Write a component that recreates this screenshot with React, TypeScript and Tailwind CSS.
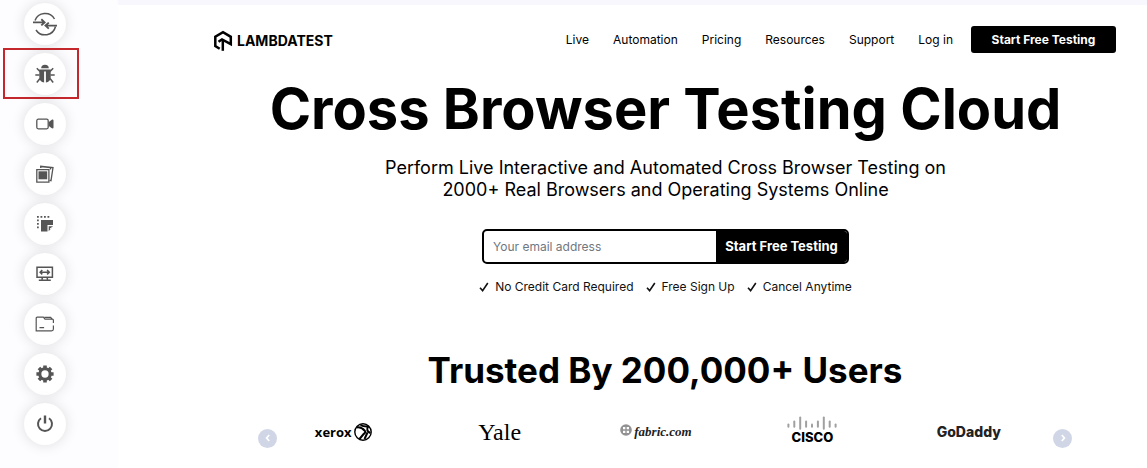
import type { ReactNode } from "react";

const stroke = { fill: "none", stroke: "currentColor" } as const;

const tools: { label: string; active?: boolean; icon: ReactNode }[] = [
  {
    label: "Switch",
    icon: (
      <svg viewBox="0 0 26 26" className="size-[26px]" {...stroke} strokeWidth="1.5">
        <path d="M3 9.5A10.8 10.8 0 0 1 22.5 8M23.5 15.5A10.8 10.8 0 0 1 4 19" />
        <path strokeWidth="1.9" d="M1 11.4H12M9.3 8.3l3.3 3.1-3.3 3M25 14.6H14M16.8 11.6l-3.3 3 3.3 3" />
      </svg>
    ),
  },
  {
    label: "Bug",
    active: true,
    icon: (
      <svg viewBox="0 0 20 20" className="size-5">
        <path fill="currentColor" d="M6.2 4.3a3.8 3.6 0 0 1 7.6 0zM4.3 5.4h11.4v8.2c0 2.6-1.8 4.6-4.8 5V7.4H9.1v11.2c-3-.4-4.8-2.4-4.8-5z" />
        <path {...stroke} strokeWidth="1.5" d="M5 7.6 1.8 4.3M15 7.6l3.2-3.3M4.5 11H.3M15.5 11h4.2M5 14.5l-3.2 4M15 14.5l3.2 4" />
      </svg>
    ),
  },
  {
    label: "Record video",
    icon: (
      <svg viewBox="0 0 18 12" className="h-3 w-[18px]">
        <rect x=".8" y="1.2" width="11.4" height="9.6" rx="1.5" {...stroke} strokeWidth="1.3" />
        <path fill="currentColor" d="M12.8 4 15.5 2c1-.8 2-.6 2 .6v6.8c0 1.2-1 1.4-2 .6l-2.7-2z" />
      </svg>
    ),
  },
  {
    label: "Gallery",
    icon: (
      <svg viewBox="0 0 18 18" className="size-[18px]">
        <path {...stroke} strokeWidth="1.3" d="M.8 4.7h12.1v12.4H.8zM4.7 3V1.2l12.3 1.3-2 13.2-1.2-.3M5 1.6l9.5 1v2" />
        <path fill="currentColor" d="M2.5 6.3h8.7v8H2.5z" />
      </svg>
    ),
  },
  {
    label: "Capture area",
    icon: (
      <svg viewBox="0 0 18 18" className="size-[18px]">
        <path {...stroke} strokeWidth="1.7" strokeDasharray="1.8 1.7" d="M1 1.9h13.8M1.9 4.5v9" />
        <path fill="currentColor" d="M5 5h12v5h-5.5v6.5H5zM12.7 11.3h4.2l-4.2 4.9z" />
        <path stroke="white" strokeWidth=".9" d="m14 14 1.6-1.7" />
      </svg>
    ),
  },
  {
    label: "Resolution",
    icon: (
      <svg viewBox="0 0 18 16" className="h-4 w-[18px]">
        <path {...stroke} strokeWidth="1.5" d="M1 1.2h15.4v10H1zM6.5 11.5l-.6 2M11 11.5l.6 2M2.8 14.3h12M4.2 6.2h9M6.3 4 4.1 6.2l2.2 2.2M11.1 4l2.2 2.2-2.2 2.2" />
      </svg>
    ),
  },
  {
    label: "Files",
    icon: (
      <svg viewBox="0 0 20 16" className="h-4 w-5" {...stroke} strokeWidth="1.2">
        <path d="M18.4 7V4.2c0-.7-.4-1-1-1H10L8.3 1.2H2.2c-.7 0-1 .3-1 1v12.6h15.4c1.2 0 1.8-.6 1.8-1.8V9.5" />
        <path d="M9.3 1.3h6.4l1.2 1.8M4.5 11.7h4.6" />
      </svg>
    ),
  },
  {
    label: "Settings",
    icon: (
      <svg viewBox="0 0 18 18" className="size-[18px]">
        <circle cx="9" cy="9" r="5.2" {...stroke} strokeWidth="3.1" />
        <path {...stroke} strokeWidth="3.6" d="M9 .4v3M9 14.6v3M.4 9h3M14.6 9h3M2.9 2.9 5 5M13 13l2.1 2.1M15.1 2.9 13 5M5 13l-2.1 2.1" />
      </svg>
    ),
  },
  {
    label: "End session",
    icon: (
      <svg viewBox="0 0 18 18" className="size-[18px]" {...stroke} strokeWidth="2">
        <path d="M5 3.3a7 7 0 1 0 8 0" />
        <path d="M9 .5v8" strokeWidth="2.4" />
      </svg>
    ),
  },
];

const links = ["Live", "Automation", "Pricing", "Resources", "Support", "Log in"];
const perks = ["No Credit Card Required", "Free Sign Up", "Cancel Anytime"];
const bars = [4, 7, 13, 7, 4, 7, 13, 7, 4];

function Arrow({ label, d }: { label: string; d: string }) {
  return (
    <button
      type="button"
      aria-label={label}
      className="mt-3 flex size-[19px] shrink-0 items-center justify-center rounded-full bg-[#d1d6e6] text-white"
    >
      <svg viewBox="0 0 8 8" className="size-2" {...stroke} strokeWidth="1.7">
        <path d={d} />
      </svg>
    </button>
  );
}

function Brands() {
  return (
    <ul className="grid flex-1 grid-cols-5 items-center justify-items-center">
      <li className="flex items-center gap-0.5 font-['Open_Sans',sans-serif] text-[13px] leading-5 font-bold">
        xerox
        <svg viewBox="0 0 18 18" className="size-[18px]">
          <circle cx="9" cy="9" r="8.2" {...stroke} strokeWidth="1.4" />
          <path {...stroke} strokeWidth="2" d="M2.6 4.5c3-.6 5.4.2 8.2 3.2 1 1 .4 2.2-1.2 3.4L5.5 16M6.5 2.2c3 1.6 5 1.3 8.5 1.5M14 3.5c-1.5 3-1 5 2.4 6.5M13.5 9.5l-3 6.5" />
        </svg>
      </li>
      <li className="font-['Liberation_Serif',serif] text-[24px] leading-6">Yale</li>
      <li className="flex items-center gap-0.5 font-['Liberation_Serif',serif] text-[13px] leading-5 font-bold italic text-[#222]">
        <svg viewBox="0 0 12 12" className="mb-1 size-3">
          <circle cx="6" cy="6" r="5.8" fill="#929292" />
          <path fill="white" d="M3 3h2.3v2.3H3zM6.7 3H9v2.3H6.7zM3 6.7h2.3V9H3zM6.7 6.7H9V9H6.7z" />
        </svg>
        fabric.com
      </li>
      <li className="flex flex-col items-center pb-1">
        <svg viewBox="0 0 50 14" className="h-3.5 w-[50px] text-[#a0a0a0]" {...stroke} strokeWidth="2" strokeLinecap="round">
          {bars.map((h, i) => (
            <path key={i} d={`M${1.4 + i * 5.9} ${h === 13 ? 12.8 : 10.8}v${1.8 - h}`} />
          ))}
        </svg>
        <span className="text-[13px] leading-[14px] font-extrabold">CISCO</span>
      </li>
      <li className="text-[14px] leading-5 font-extrabold text-[#222]">GoDaddy</li>
    </ul>
  );
}

export default function App() {
  return (
    <div className="flex bg-white font-['Inter',sans-serif] text-black">
      <aside className="w-[118px] shrink-0 bg-[#fdfdff] pt-[3px] pb-[23px] pl-6">
        <ul className="flex flex-col gap-2">
          {tools.map((t) => (
            <li key={t.label} className="relative size-[42px]">
              <button
                type="button"
                aria-label={t.label}
                className="flex size-[42px] items-center justify-center rounded-full bg-white text-[#555] shadow-[0_0_14px_rgba(0,0,0,0.13)]"
              >
                {t.icon}
              </button>
              {t.active && (
                <span className="pointer-events-none absolute -top-[5px] -right-[13px] -bottom-1 -left-[21px] border-2 border-[#c4282d]" />
              )}
            </li>
          ))}
        </ul>
      </aside>

      <main className="min-w-0 flex-1 border-t-[5px] border-[#f7f7fd]">
        <header className="flex items-center justify-between pt-[21px] pr-[31px] pl-[95px]">
          <a href="#home" className="flex items-center gap-1 pt-0.5 text-[14px] leading-5 font-bold">
            <svg viewBox="0 0 20 22" className="h-[22px] w-5" {...stroke} strokeWidth="2.5">
              <path d="M6.7 18.8 2.3 16V6.7L10 2.2l7.8 4.6v7.4L9 9.4 5.5 11.8" />
              <path d="M9.8 9.6v11.2" />
            </svg>
            LAMBDATEST
          </a>
          <nav className="flex items-center leading-[27px]">
            <ul className="flex gap-6 pr-[18px] text-[12px]">
              {links.map((l) => (
                <li key={l}>
                  <a href="#nav">{l}</a>
                </li>
              ))}
            </ul>
            <button type="button" className="w-[145px] rounded-[3px] bg-black text-[12px] font-bold text-white">
              Start Free Testing
            </button>
          </nav>
        </header>

        <section className="flex flex-col items-center pt-[22px] pl-[66px] text-center">
          <h1 className="text-[56px] leading-[68px] font-bold">Cross Browser Testing Cloud</h1>
          <p className="pt-[14px] text-[18px] leading-[22px]">
            Perform Live Interactive and Automated Cross Browser Testing on
            <br />
            2000+ Real Browsers and Operating Systems Online
          </p>
          <form className="mt-[28px] flex h-[35px] w-[367px] overflow-hidden rounded-[5px] border-2 border-black">
            <input
              type="email"
              aria-label="Your email address"
              placeholder="Your email address"
              className="min-w-0 flex-1 px-[9px] text-[12px] outline-none placeholder:text-[#6f7780]"
            />
            <button type="button" className="w-[131px] bg-black text-[13px] font-bold text-white">
              Start Free Testing
            </button>
          </form>
          <ul className="flex gap-3 pt-[14px] text-[12px] leading-[18px] text-[#111]">
            {perks.map((p) => (
              <li key={p} className="flex items-center gap-1.5">
                <svg viewBox="0 0 10 10" className="size-2.5" {...stroke} strokeWidth="1.6">
                  <path d="m1 5.8 2.6 2.8L8.8 1" />
                </svg>
                {p}
              </li>
            ))}
          </ul>
        </section>

        <section className="pt-[53px] pr-[75px] pl-[140px]">
          <h2 className="text-center text-[35px] leading-[42px] font-bold">Trusted By 200,000+ Users</h2>
          <div className="flex h-[60px] items-center pt-[22px]">
            <Arrow label="Previous" d="M5.2 1 2.6 4l2.6 3" />
            <div className="mr-1.5 -ml-3 flex flex-1">
              <Brands />
            </div>
            <Arrow label="Next" d="M2.8 1l2.6 3-2.6 3" />
          </div>
        </section>
      </main>
    </div>
  );
}
